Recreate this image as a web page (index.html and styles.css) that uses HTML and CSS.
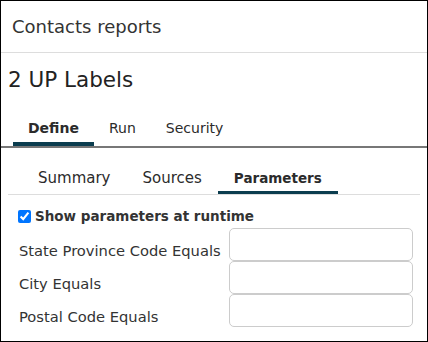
FILE: index.html
```html
<!DOCTYPE html>
<html lang="en">
<head>
    <meta charset="UTF-8">
    <meta name="viewport" content="width=device-width, initial-scale=1.0">
    <title>Contacts reports</title>
    <link rel="stylesheet" href="styles.css">
</head>
<body>
    <div class="panel">
        <div class="header">Contacts reports</div>
        <div class="report-name">2 UP Labels</div>

        <div class="tabs">
            <div class="tab active">Define</div>
            <div class="tab">Run</div>
            <div class="tab">Security</div>
        </div>

        <div class="subtabs">
            <div class="subtab">Summary</div>
            <div class="subtab">Sources</div>
            <div class="subtab active">Parameters</div>
        </div>

        <div class="params">
            <label class="show-params">
                <input type="checkbox" checked>
                <span>Show parameters at runtime</span>
            </label>

            <div class="param-row">
                <label for="state">State Province Code Equals</label>
                <input type="text" id="state">
            </div>
            <div class="param-row">
                <label for="city">City Equals</label>
                <input type="text" id="city">
            </div>
            <div class="param-row">
                <label for="postal">Postal Code Equals</label>
                <input type="text" id="postal">
            </div>
        </div>
    </div>
</body>
</html>
```

FILE: styles.css
```css
* {
    box-sizing: border-box;
    font-family: "DejaVu Sans", sans-serif;
}

body {
    margin: 0;
    background-color: white;
}

.panel {
    width: 428px;
    height: 342px;
    border: 1px solid #000;
    color: #2b2b2b;
}

.header {
    height: 52px;
    line-height: 51px;
    padding-left: 11px;
    font-size: 18px;
    color: #333;
    border-bottom: 1px solid #ddd;
}

.report-name {
    padding: 13px 0 12px 7px;
    line-height: 28px;
    font-size: 21.5px;
    color: #222;
}

.tabs {
    display: flex;
    padding-left: 12px;
    border-bottom: 2px solid #777;
}

.tab {
    padding: 12px 15px 4px;
    line-height: 20px;
    font-size: 14px;
    border-bottom: 4px solid transparent;
}

.tab.active {
    font-weight: 600;
    border-bottom-color: #0b3d4f;
}

.subtabs {
    display: flex;
    margin: 0 7px;
    padding-left: 14px;
    border-bottom: 1px solid #ddd;
}

.subtab {
    padding: 20px 16px 3px;
    line-height: 20px;
    font-size: 15px;
    border-bottom: 3px solid transparent;
}

.subtab.active {
    font-size: 13.5px;
    font-weight: 600;
    border-bottom-color: #0b3d4f;
}

.params {
    padding: 10px 0 0 17px;
}

.show-params {
    display: flex;
    align-items: center;
    gap: 4px;
    height: 22px;
    margin-bottom: 1px;
    font-size: 13.5px;
    font-weight: 600;
    color: #333;
}

.show-params input {
    margin: 0;
    width: 13px;
    height: 13px;
}

.param-row {
    display: flex;
    align-items: center;
    height: 33px;
}

.param-row label {
    width: 211px;
    padding: 12px 0 0 1px;
    font-size: 14.7px;
    color: #333;
}

.param-row input {
    width: 184px;
    height: 33px;
    border: 1px solid #ccc;
    border-radius: 5px;
}
```
